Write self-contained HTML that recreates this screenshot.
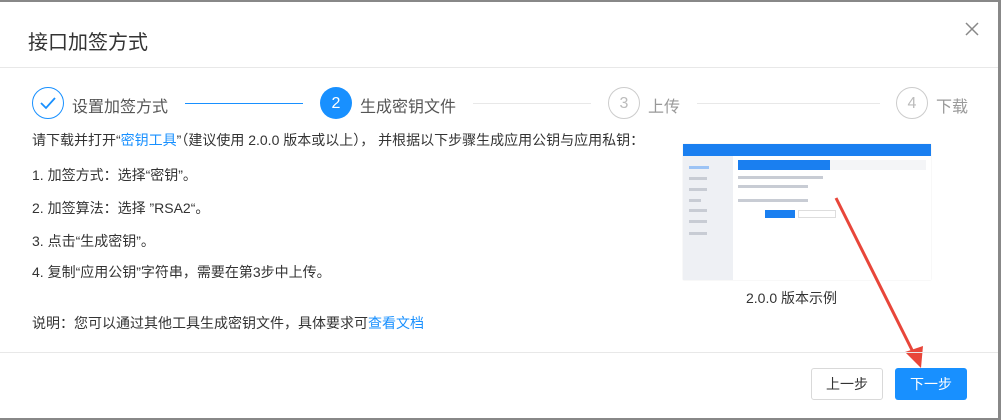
<!DOCTYPE html>
<html><head><meta charset="utf-8"><style>
*{margin:0;padding:0;box-sizing:border-box}
body{width:1001px;height:420px;overflow:hidden;background:#fff;font-family:"Liberation Sans","Noto Sans CJK SC",sans-serif;color:#333;position:relative}
.frame{position:absolute;left:0;top:0;width:1001px;height:420px;border-top:2px solid #888;border-right:3px solid #888;border-bottom:2px solid #888}
.a{position:absolute;white-space:nowrap}
.c{position:absolute;width:32px;height:32px;border-radius:50%;top:87px;text-align:center;line-height:32px;font-size:16px}
.t{font-size:14px;color:#333}
.btn{position:absolute;top:368px;width:72px;height:32px;border-radius:3px;font-size:14px;text-align:center;line-height:30px}
.g{position:absolute;height:3px;background:#c8ccd4}
</style></head><body>
<div class="frame"></div>
<div class="a" style="left:28px;top:26px;font-size:20px;color:#333">接口加签方式</div>
<svg class="a" style="left:964px;top:21px" width="16" height="16"><path d="M2 2L14 14M14 2L2 14" stroke="#888" stroke-width="1.5"/></svg>
<div class="a" style="left:0;top:67px;width:998px;height:1px;background:#e8e8e8"></div>

<div class="c" style="left:32px;border:1px solid #1890ff"><svg width="30" height="30"><path d="M8 15l5 5 9-10" stroke="#1890ff" stroke-width="1.8" fill="none"/></svg></div>
<div class="a" style="left:72px;top:93px;font-size:16px;color:#555">设置加签方式</div>
<div class="a" style="left:185px;top:103px;width:118px;height:1px;background:#1890ff"></div>
<div class="c" style="left:320px;background:#1890ff;color:#fff;line-height:33px">2</div>
<div class="a" style="left:360px;top:93px;font-size:16px;color:#555">生成密钥文件</div>
<div class="a" style="left:473px;top:103px;width:118px;height:1px;background:#e8e8e8"></div>
<div class="c" style="left:608px;border:1px solid #ccc;color:#bbb;line-height:31px">3</div>
<div class="a" style="left:648px;top:93px;font-size:16px;color:#999">上传</div>
<div class="a" style="left:697px;top:103px;width:183px;height:1px;background:#e8e8e8"></div>
<div class="c" style="left:896px;border:1px solid #ccc;color:#bbb;line-height:31px">4</div>
<div class="a" style="left:936px;top:93px;font-size:16px;color:#999">下载</div>

<div class="a t" style="left:32px;top:130px">请下载并打开“<span style="color:#1890ff">密钥工具</span>”（建议使用 2.0.0 版本或以上）， 并根据以下步骤生成应用公钥与应用私钥：</div>
<div class="a t" style="left:32px;top:165px">1. 加签方式：选择“密钥”。</div>
<div class="a t" style="left:32px;top:198px">2. 加签算法：选择 ”RSA2“。</div>
<div class="a t" style="left:32px;top:231px">3. 点击“生成密钥”。</div>
<div class="a t" style="left:32px;top:262px">4. 复制“应用公钥”字符串，需要在第3步中上传。</div>
<div class="a t" style="left:32px;top:313px">说明：您可以通过其他工具生成密钥文件，具体要求可<span style="color:#1890ff">查看文档</span></div>

<div class="a" style="left:683px;top:144px;width:248px;height:136px;background:#fff;box-shadow:0 0 1px #ddd">
 <div class="a" style="left:0;top:0;width:248px;height:12px;background:#1a7ff0"></div>
 <div class="a" style="left:0;top:12px;width:50px;height:124px;background:#eef0f4"></div>
 <div class="g" style="left:6px;top:22px;width:20px;background:#9cc3f5"></div>
 <div class="g" style="left:6px;top:33px;width:18px"></div>
 <div class="g" style="left:6px;top:44px;width:18px"></div>
 <div class="g" style="left:6px;top:55px;width:12px"></div>
 <div class="g" style="left:6px;top:65px;width:18px"></div>
 <div class="g" style="left:6px;top:76px;width:18px"></div>
 <div class="g" style="left:6px;top:88px;width:18px"></div>
 <div class="a" style="left:55px;top:16px;width:92px;height:10px;background:#1a7ff0"></div>
 <div class="a" style="left:147px;top:16px;width:96px;height:10px;background:#f4f5f7"></div>
 <div class="g" style="left:55px;top:32px;width:85px"></div>
 <div class="g" style="left:55px;top:41px;width:70px"></div>
 <div class="g" style="left:55px;top:55px;width:70px"></div>
 <div class="a" style="left:82px;top:66px;width:30px;height:8px;background:#1a7ff0"></div>
 <div class="a" style="left:115px;top:66px;width:38px;height:8px;border:1px solid #ddd"></div>
</div>
<svg class="a" style="left:0;top:0" width="1001" height="420"><path d="M836 198L914 354" stroke="#e8463a" stroke-width="3"/><path d="M905 352L921 368L923 346Z" fill="#e8463a"/></svg>
<div class="a t" style="left:746px;top:288px">2.0.0 版本示例</div>

<div class="a" style="left:0;top:352px;width:998px;height:1px;background:#e8e8e8"></div>
<div class="btn" style="left:811px;border:1px solid #d9d9d9;color:#333">上一步</div>
<div class="btn" style="left:895px;background:#1890ff;color:#fff;line-height:32px">下一步</div>
</body></html>
